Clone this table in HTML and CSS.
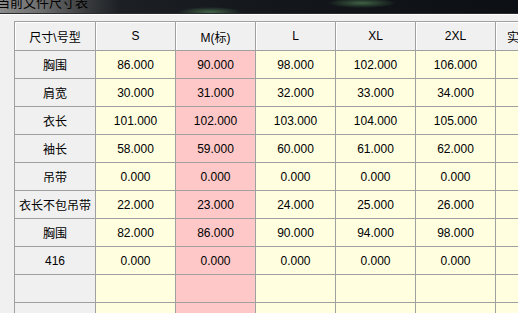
FILE: index.html
```html
<!DOCTYPE html>
<html lang="zh-CN">
<head>
<meta charset="utf-8">
<title>当前文件尺寸表</title>
<link rel="stylesheet" href="styles.css">
</head>
<body>
<div class="window">
  <div class="titlebar"><span class="title">当前文件尺寸表</span></div>
  <div class="client">
    <div class="grid">
      <div class="cell hd">尺寸\号型</div>
      <div class="cell hd">S</div>
      <div class="cell hd">M(标)</div>
      <div class="cell hd">L</div>
      <div class="cell hd">XL</div>
      <div class="cell hd">2XL</div>
      <div class="cell hd hd-last">实测尺寸</div>

      <div class="cell rh">胸围</div><div class="cell y">86.000</div><div class="cell p">90.000</div><div class="cell y">98.000</div><div class="cell y">102.000</div><div class="cell y">106.000</div><div class="cell y"></div>
      <div class="cell rh">肩宽</div><div class="cell y">30.000</div><div class="cell p">31.000</div><div class="cell y">32.000</div><div class="cell y">33.000</div><div class="cell y">34.000</div><div class="cell y"></div>
      <div class="cell rh">衣长</div><div class="cell y">101.000</div><div class="cell p">102.000</div><div class="cell y">103.000</div><div class="cell y">104.000</div><div class="cell y">105.000</div><div class="cell y"></div>
      <div class="cell rh">袖长</div><div class="cell y">58.000</div><div class="cell p">59.000</div><div class="cell y">60.000</div><div class="cell y">61.000</div><div class="cell y">62.000</div><div class="cell y"></div>
      <div class="cell rh">吊带</div><div class="cell y">0.000</div><div class="cell p">0.000</div><div class="cell y">0.000</div><div class="cell y">0.000</div><div class="cell y">0.000</div><div class="cell y"></div>
      <div class="cell rh">衣长不包吊带</div><div class="cell y">22.000</div><div class="cell p">23.000</div><div class="cell y">24.000</div><div class="cell y">25.000</div><div class="cell y">26.000</div><div class="cell y"></div>
      <div class="cell rh">胸围</div><div class="cell y">82.000</div><div class="cell p">86.000</div><div class="cell y">90.000</div><div class="cell y">94.000</div><div class="cell y">98.000</div><div class="cell y"></div>
      <div class="cell rh">416</div><div class="cell y">0.000</div><div class="cell p">0.000</div><div class="cell y">0.000</div><div class="cell y">0.000</div><div class="cell y">0.000</div><div class="cell y"></div>
      <div class="cell rh"></div><div class="cell y"></div><div class="cell p"></div><div class="cell y"></div><div class="cell y"></div><div class="cell y"></div><div class="cell y"></div>
      <div class="cell rh"></div><div class="cell y"></div><div class="cell p"></div><div class="cell y"></div><div class="cell y"></div><div class="cell y"></div><div class="cell y"></div>
    </div>
  </div>
</div>
</body>
</html>
```
FILE: styles.css
```css
html, body {
  margin: 0;
  padding: 0;
  width: 518px;
  height: 313px;
  overflow: hidden;
  background: #f0f0f0;
}

.window {
  width: 518px;
  height: 313px;
  overflow: hidden;
  display: flex;
  flex-direction: column;
  font-family: "Liberation Sans", "Noto Sans CJK SC", sans-serif;
  font-size: 12px;
  color: #000;
}

.titlebar {
  height: 13px;
  flex: none;
  overflow: hidden;
  border-bottom: 1px solid #2a2d30;
  box-shadow: 0 1px 0 #ffffff;
  background:
    radial-gradient(ellipse 32px 5px at 210px 12px, rgba(120, 190, 120, 0.45), rgba(120, 190, 120, 0) 100%),
    radial-gradient(ellipse 34px 5px at 362px 3px, rgba(120, 190, 120, 0.45), rgba(120, 190, 120, 0) 100%),
    linear-gradient(to right, #8c8c8c 0, #6e6e6e 40px, #3a3c3e 85px, #1c2024 120px, #14181c 260px, #0c1014 100%);
}

.title {
  display: block;
  margin-top: -7px;
  margin-left: -3px;
  line-height: 18px;
  font-size: 13px;
  font-family: "Noto Sans CJK SC", sans-serif;
  color: #000;
  white-space: nowrap;
}

.client {
  flex: 1;
  padding: 7px 0 0 14px;
  overflow: hidden;
}

.grid {
  display: grid;
  grid-template-columns: 81px repeat(6, 80px);
  grid-template-rows: 29px;
  grid-auto-rows: 28px;
  border-top: 1px solid #a0a0a0;
  border-left: 1px solid #a0a0a0;
  width: max-content;
}

.cell {
  border-right: 1px solid #a0a0a0;
  border-bottom: 1px solid #a0a0a0;
  display: flex;
  align-items: center;
  justify-content: center;
  white-space: nowrap;
  overflow: hidden;
}

.hd {
  background: #f0f0f0;
  box-shadow: inset 1px 1px 0 #ffffff;
}

.hd-last {
  justify-content: flex-start;
  padding-left: 11px;
}

.rh {
  background: #f0f0f0;
}

.y {
  background: #ffffe0;
}

.p {
  background: #ffc8c8;
}
```
